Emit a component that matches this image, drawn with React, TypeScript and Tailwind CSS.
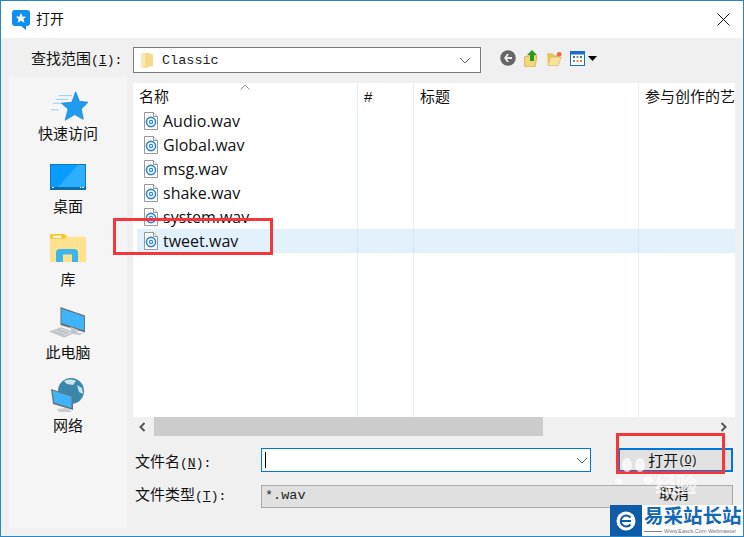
import React from "react";

const cjk = "font-['Liberation_Sans','Noto_Sans_CJK_SC',sans-serif]";

function WavIcon() {
  return (
    <svg width="14" height="18" viewBox="0 0 14 18" className="shrink-0">
      <path d="M.5.5h9l4 4v13H.5z" fill="#fff" stroke="#9a9a9a" />
      <path d="M9.5.5v4h4" fill="#eee" stroke="#9a9a9a" />
      <circle cx="7" cy="10" r="4.6" fill="none" stroke="#2b86d8" strokeWidth="1.6" />
      <circle cx="7" cy="10" r="1.6" fill="none" stroke="#2b86d8" strokeWidth="1.2" />
    </svg>
  );
}

function FileRow({ name, selected }: { name: string; selected?: boolean }) {
  return (
    <div className={`relative ml-[4px] flex h-6 items-center gap-[5px] pl-[7px] ${selected ? "bg-[#b9dcfa]/40" : ""}`}>
      <WavIcon />
      <span className="font-['Open_Sans',sans-serif] text-[16px] leading-none text-[#111]">{name}</span>
    </div>
  );
}

function SideItem({ label, icon }: { label: string; icon: React.ReactNode }) {
  return (
    <div className="flex h-[73px] flex-col items-center">
      <div className="flex h-[38px] w-[40px] items-center justify-center">{icon}</div>
      <span className={`mt-[1px] text-[15px] leading-[20px] text-[#111] ${cjk}`}>{label}</span>
    </div>
  );
}

function Label({ cn, hot, w }: { cn: string; hot: string; w: string }) {
  return (
    <span className={`${w} whitespace-nowrap text-[15px] leading-[20px] text-[#111] ${cjk}`}>
      {cn}
      <span className="font-['Liberation_Mono',monospace] text-[13px]">
        (<u>{hot}</u>):
      </span>
    </span>
  );
}

const Star = (
  <svg width="40" height="34" viewBox="0 0 40 34" className="ml-[2px] mt-[6px]">
    <g stroke="#8fcdf5" strokeWidth="1">
      <path d="M9 5h14M6 9h13M3 13h10M1 20h8" />
    </g>
    <path d="M27 1l4 10 9 1-7 7 2 11-9-5-10 6 3-12-7-6 11-1z" fill="#1f9bf0" stroke="#1886d8" strokeWidth=".8" strokeLinejoin="round" />
  </svg>
);

const Desktop = (
  <svg width="36" height="26" viewBox="0 0 36 26">
    <rect x=".5" y=".5" width="35" height="25" fill="#0a9bff" stroke="#1478b8" />
    <path d="M8 23L28 1h7v22z" fill="#2eaeff" />
    <rect x="0" y="23" width="36" height="3" fill="#0e6ea8" />
    <path d="M2 23.5h2M30 23.500h1M32 23.500h2" stroke="#fff" />
  </svg>
);

const Library = (
  <svg width="36" height="30" viewBox="0 0 36 32" className="mb-[4px]" preserveAspectRatio="none">
    <path d="M0 3a2 2 0 012-2h13l3 3h16a2 2 0 012 2v24a1 1 0 01-1 1H1a1 1 0 01-1-1z" fill="#ffe28f" />
    <path d="M0 3a2 2 0 012-2h12l3 3-3 2H0z" fill="#f8c634" />
    <rect x="3" y="3" width="8" height="2" fill="#fff" />
    <path d="M6 31V21a4 4 0 014-4h14a4 4 0 014 4v10h-6v-8h-9v8z" fill="#3db4ea" />
  </svg>
);

const Computer = (
  <svg width="40" height="34" viewBox="0 0 40 36">
    <path d="M12 1l26 9v18L12 20z" fill="#6a7278" />
    <path d="M13 3l24 8v15L13 18z" fill="#3fb4f8" />
    <path d="M22 22l8 3v3l6 1-4 2-12-3 4-1z" fill="#c4c8cb" />
    <path d="M1 27l12-4 14 5-11 5z" fill="#d0d3d6" stroke="#a8acaf" strokeWidth=".6" />
    <path d="M5 27l11 4M9 25l11 4" stroke="#9ea2a5" strokeWidth=".6" />
  </svg>
);

const Network = (
  <svg width="36" height="36" viewBox="0 0 36 36">
    <circle cx="21" cy="13" r="13" fill="#3b86ab" />
    <path d="M14 3c4-2 9-2 12 0l-3 4-6-1zM27 7l5 3 1 6-4-2z" fill="#cfe3ec" />
    <path d="M1 11l22 7v14L3 26z" fill="#6a7278" />
    <path d="M2.500 12.500l19 6v11.500L4 24.500z" fill="#3fb4f8" />
    <path d="M7 31l10-1 5 4H9z" fill="#c9cdd0" />
  </svg>
);

const Logo = (
  <svg width="18" height="20" viewBox="0 0 18 20">
    <path d="M3 0h12a3 3 0 013 3v10a3 3 0 01-3 3h-1v4l-5-4H3a3 3 0 01-3-3V3a3 3 0 013-3z" fill="#0f8ff0" />
    <path d="M9 3l1.500 3.400 3.700.3-2.800 2.400 1 3.600L9 10.800l-3.400 1.900 1-3.600-2.800-2.400 3.700-.3z" fill="#fff" />
  </svg>
);

function ToolIcons() {
  return (
    <div className="mb-[4px] ml-[19px] flex items-center gap-[7px]">
      <svg width="16" height="16" viewBox="0 0 16 16">
        <circle cx="8" cy="8" r="7.800" fill="#666" />
        <path d="M12 7H7l2-3H7L4 8l3 4h2L7 9h5z" fill="#eee" />
      </svg>
      <svg width="15" height="17" viewBox="0 0 15 17" className="ml-[1px]">
        <path d="M0 7l8-2 5 1-2 11H1z" fill="#f4d67c" stroke="#c9a23e" strokeWidth=".7" />
        <path d="M8 0l5 5h-3v6H6V5H3z" fill="#2b9a22" />
      </svg>
      <svg width="16" height="15" viewBox="0 0 17 15" className="ml-[1px]">
        <path d="M0 2h6l2 2h5v2H4l-3 9z" fill="#e6c463" />
        <path d="M1 15l3-9h11l-3 9z" fill="#fbe39a" stroke="#d0a94a" strokeWidth=".6" />
        <circle cx="13" cy="3" r="2.500" fill="#f0683a" />
      </svg>
      <svg width="15" height="15" viewBox="0 0 15 15">
        <rect x=".5" y=".5" width="14" height="14" fill="#fff" stroke="#1a6fc4" />
        <rect x="1" y="1" width="13" height="2.500" fill="#1a6fc4" />
        <path d="M3 5h2v2H3z" fill="#3a6fc4" />
        <path d="M6.500 5h2v2h-2z" fill="#888" />
        <path d="M10 5h2v2h-2z" fill="#2a9a3c" />
        <path d="M3 9h2v2H3z" fill="#888" />
        <path d="M6.500 9h2v2h-2z" fill="#e08a30" />
        <path d="M10 9h2v2h-2z" fill="#e08a30" />
      </svg>
      <svg width="9" height="5" viewBox="0 0 9 5" className="-ml-[4px]">
        <path d="M0 0h9L4.500 5z" fill="#000" />
      </svg>
    </div>
  );
}

const Chevron = () => (
  <svg width="12" height="7" viewBox="0 0 12 7">
    <path d="M1 1l5 5 5-5" fill="none" stroke="#666" strokeWidth="1" />
  </svg>
);

function Header({ label, w, pad }: { label: string; w: string; pad: string }) {
  return (
    <div className={`${w} ${pad} flex h-full shrink-0 items-center whitespace-nowrap pt-[2px] text-[15px] text-[#111] ${cjk}`}>
      {label}
    </div>
  );
}

export default function App() {
  const files = ["Audio.wav", "Global.wav", "msg.wav", "shake.wav", "system.wav"];
  return (
    <div className="relative flex h-[537px] w-[744px] flex-col overflow-hidden border border-[#2a87c4] bg-[#f0f0f0]">
      <div className="flex h-[37px] shrink-0 items-center bg-white pl-[11px] pr-[13px]">
        {Logo}
        <span className={`ml-[6px] text-[14px] text-[#111] ${cjk}`}>打开</span>
        <svg width="13" height="13" viewBox="0 0 13 13" className="ml-auto">
          <path d="M.5.5l12 12M12.500.5l-12 12" stroke="#111" strokeWidth="1" fill="none" />
        </svg>
      </div>

      <div className="flex h-[39px] shrink-0 items-center pl-[30px] pt-[5px]">
        <Label cn="查找范围" hot="I" w="w-[102px]" />
        <div className="flex h-[26px] w-[348px] items-center border border-[#7a7a7a] bg-white pl-[7px] pr-[9px]">
          <svg width="13" height="17" viewBox="0 0 13 17">
            <path d="M0 1h8l4 2v11l-8 2-4-1z" fill="#f6d98a" />
            <path d="M0 1h4v14H0z" fill="#fbe9b4" />
          </svg>
          <span className="ml-[8px] pt-[2px] font-['Liberation_Mono',monospace] text-[13.500px] text-[#222]">Classic</span>
          <span className="ml-auto flex"><Chevron /></span>
        </div>
        <ToolIcons />
      </div>

      <div className="flex min-h-0 flex-1 pb-[8px] pl-[8px]">
        <div className="flex w-[118px] shrink-0 flex-col bg-[#f5f5f5] pt-[8px]">
          <SideItem label="快速访问" icon={Star} />
          <SideItem label="桌面" icon={Desktop} />
          <SideItem label="库" icon={Library} />
          <SideItem label="此电脑" icon={Computer} />
          <SideItem label="网络" icon={Network} />
        </div>

        <div className="ml-[6px] flex w-[602px] shrink-0 flex-col pt-[6px]">
          <div className="relative h-[334px] bg-white">
            <div className="absolute inset-0 flex">
              <div className="w-[225px] border-r border-[#e6eef8]" />
              <div className="w-[56px] border-r border-[#e6eef8]" />
              <div className="w-[225px] border-r border-[#e6eef8]" />
            </div>
            <div className="relative flex h-[26px] items-center">
              <Header label="名称" w="w-[225px]" pad="pl-[6px]" />
              <Header label="#" w="w-[56px]" pad="pl-[6px]" />
              <Header label="标题" w="w-[225px]" pad="pl-[6px]" />
              <Header label="参与创作的艺" w="w-[96px]" pad="pl-[6px]" />
              <svg width="10" height="6" viewBox="0 0 10 6" className="absolute left-[107px] top-[1px]">
                <path d="M.5 5.500L5 1l4.500 4.500" fill="none" stroke="#999" />
              </svg>
            </div>
            {files.map((f) => (
              <FileRow key={f} name={f} />
            ))}
            <FileRow name="tweet.wav" selected />
          </div>

          <div className="flex h-[19px] w-[600px] items-center">
            <div className="flex h-full w-[21px] items-center pl-[5px]">
              <svg width="8" height="10" viewBox="0 0 8 10"><path d="M6.500 1l-4 4 4 4" fill="none" stroke="#555" strokeWidth="2" /></svg>
            </div>
            <div className="h-full w-[389px] bg-[#cccccc]" />
            <div className="ml-auto flex h-full items-center pr-[5px]">
              <svg width="8" height="10" viewBox="0 0 8 10"><path d="M1.500 1l4 4-4 4" fill="none" stroke="#555" strokeWidth="2" /></svg>
            </div>
          </div>

          <div className="mt-[12px] flex h-[24px] items-center pl-[2px]">
            <span className="flex w-[126px] pt-[6px]">
              <Label cn="文件名" hot="N" w="" />
            </span>
            <div className="flex h-[24px] w-[330px] items-center border border-[#0078d7] bg-white pl-[3px] pr-[2px]">
              <div className="h-[16px] w-px bg-black" />
              <span className="ml-auto flex"><Chevron /></span>
            </div>
            <div className={`ml-[27px] flex h-[24px] w-[115px] items-center justify-center border-2 border-[#0078d7] bg-[#e1e1e1] pr-[6px] pt-[2px] text-[15px] text-[#111] ${cjk}`}>
              打开
              <span className="font-['Liberation_Mono',monospace] text-[12px] tracking-[-1px]">
                (<u>O</u>)
              </span>
            </div>
          </div>

          <div className="mt-[12px] flex h-[24px] items-center pl-[2px]">
            <Label cn="文件类型" hot="T" w="w-[126px]" />
            <div className="flex h-[23px] w-[472px] items-center border border-[#a9a9a9] bg-[#e0e0e0] pl-[3px] pr-[43px]">
              <span className="pt-[1px] font-['Liberation_Mono',monospace] text-[13.500px] text-[#222]">*.wav</span>
              <span className={`ml-auto -mt-[4px] text-[15px] text-[#111] ${cjk}`}>取消</span>
            </div>
          </div>
        </div>
      </div>

      {/* red annotation boxes */}
      <div className="absolute left-[112px] top-[217px] h-[37px] w-[160px] border-[3px] border-[#f4373a]" />
      <div className="absolute left-[615px] top-[432px] h-[41px] w-[109px] border-[3px] border-[#f4373a]" />

      {/* watermark */}
      <svg width="42" height="34" viewBox="0 0 42 34" className="absolute left-[614px] top-[456px] opacity-70">
        <ellipse cx="12" cy="8" rx="5" ry="7" fill="#fff" />
        <ellipse cx="25" cy="8" rx="5" ry="7" fill="#fff" />
        <ellipse cx="4" cy="24" rx="4" ry="3" fill="#fff" />
        <ellipse cx="33" cy="23" rx="5" ry="4" fill="#fff" />
      </svg>
      <span className={`absolute left-[654px] top-[472px] text-[21px] font-bold leading-[24px] text-white/70 ${cjk}`}>经验</span>

      {/* site badge */}
      <div className="absolute left-[609px] top-[504px] flex h-[32px] w-[134px] bg-white">
        <div className="flex h-[32px] w-[32px] shrink-0 items-center justify-center bg-[#0e5ba8]">
          <svg width="20" height="20" viewBox="0 0 20 20">
            <circle cx="10" cy="10" r="9.500" fill="#fff" />
            <path d="M5 10h10M14.500 6.500a5.500 5.500 0 100 7" fill="none" stroke="#0e5ba8" strokeWidth="2" />
          </svg>
        </div>
        <div className="flex min-w-0 flex-1 flex-col pl-[2px]">
          <span className={`whitespace-nowrap text-[19.500px] font-bold leading-[22px] text-[#1568b4] ${cjk}`}>易采站长站</span>
          <div className="flex items-center gap-[2px]">
            <div className="h-px w-[18px] shrink-0 bg-[#888]" />
            <span className="whitespace-nowrap font-['Liberation_Sans',sans-serif] text-[5.500px] leading-[8px] text-[#777]">Www.Easck.Com Webmaster</span>
          </div>
        </div>
      </div>
    </div>
  );
}
